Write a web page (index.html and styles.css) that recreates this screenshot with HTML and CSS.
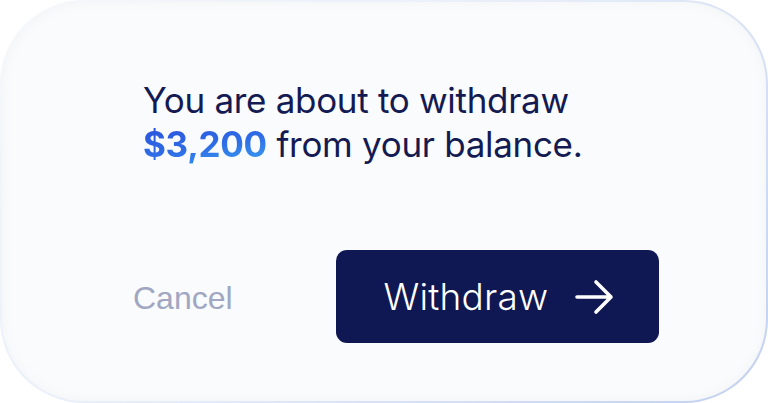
FILE: index.html
```html
<!DOCTYPE html>
<html lang="en">
<head>
<meta charset="utf-8">
<title>Withdraw</title>
<link rel="stylesheet" href="styles.css">
</head>
<body>
<div class="card">
  <p class="message">You are about to withdraw<br><span class="amount">$3,200</span> from your balance.</p>
  <div class="actions">
    <button class="btn-cancel" type="button">Cancel</button>
    <button class="btn-withdraw" type="button">
      <span>Withdraw</span>
      <svg class="arrow" width="40" height="36" viewBox="0 0 40 36" aria-hidden="true">
        <path d="M3 18 H37 M22 3 L37 18 L22 33" fill="none" stroke="#ffffff" stroke-width="3.6" stroke-linecap="round" stroke-linejoin="round"/>
      </svg>
    </button>
  </div>
</div>
</body>
</html>
```

FILE: styles.css
```css
html, body {
  margin: 0;
  padding: 0;
  width: 768px;
  height: 403px;
  background: #ffffff;
  overflow: hidden;
}

.card {
  box-sizing: border-box;
  width: 768px;
  height: 403px;
  border: 2px solid transparent;
  border-radius: 84px;
  background:
    linear-gradient(#f9fbfc, #f9fbfc) padding-box,
    linear-gradient(135deg, #f6f8fb 0%, #e8eef9 45%, #c2d0f0 100%) border-box;
  box-shadow: inset 0 0 14px rgba(30, 40, 80, 0.035);
  display: flex;
  flex-direction: column;
  padding: 76px 107px 58px 131px;
}

.message {
  margin: 0 0 0 10px;
  font-family: "Inter", "Noto Sans", sans-serif;
  font-size: 35px;
  line-height: 44px;
  font-weight: 400;
  color: #141a52;
  letter-spacing: -0.3px;
}

.amount {
  font-weight: 700;
  background: linear-gradient(170deg, #2a4edb 0%, #2f6ee6 55%, #3aa3f2 100%);
  -webkit-background-clip: text;
  background-clip: text;
  color: transparent;
}

.actions {
  margin-top: auto;
  display: flex;
  align-items: center;
  justify-content: space-between;
}

.btn-cancel {
  border: 0;
  background: none;
  padding: 0;
  margin-top: 3px;
  font-family: "Liberation Sans", Arial, sans-serif;
  font-size: 32px;
  color: #a1a7c2;
}

.btn-withdraw {
  width: 323px;
  height: 93px;
  border: 0;
  border-radius: 11px;
  background: #0f1852;
  color: #ffffff;
  display: flex;
  align-items: center;
  justify-content: center;
  gap: 26px;
  padding: 0 0 0 3px;
  font-family: "Inter", "Noto Sans", sans-serif;
  font-size: 37px;
  font-weight: 300;
  letter-spacing: 0.2px;
}

.arrow {
  display: block;
}
```
